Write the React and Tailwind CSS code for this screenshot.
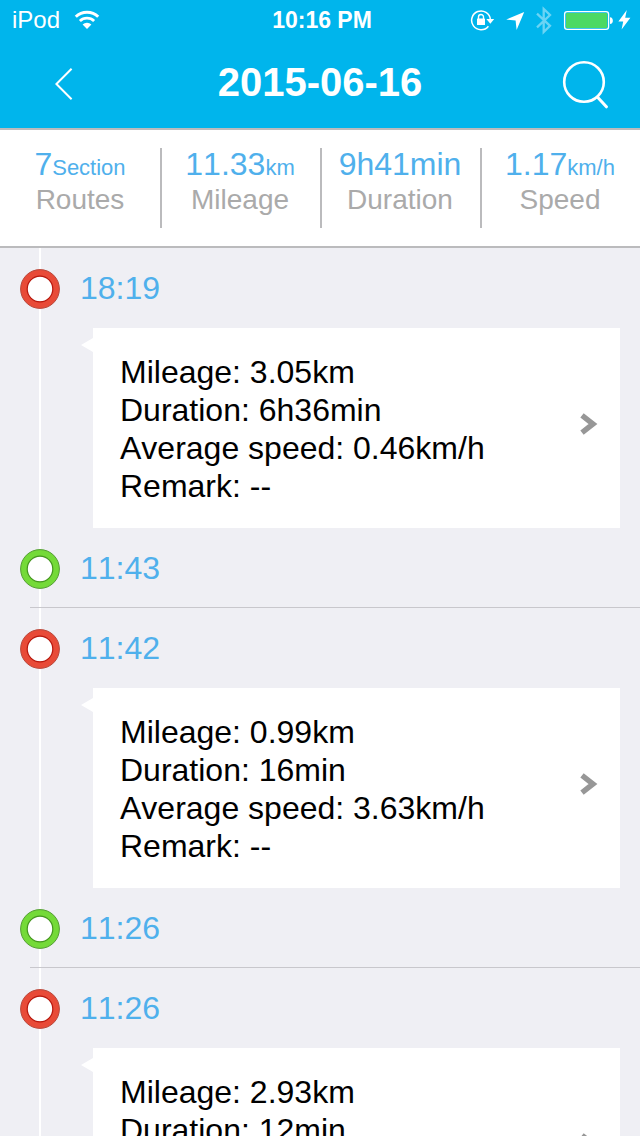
import React from "react";

const stats = [
  { value: "7", unit: "Section", label: "Routes" },
  { value: "11.33", unit: "km", label: "Mileage" },
  { value: "9h41min", unit: "", label: "Duration" },
  { value: "1.17", unit: "km/h", label: "Speed" },
];

const trips = [
  { end: "18:19", start: "11:43", mileage: "3.05km", duration: "6h36min", speed: "0.46km/h", remark: "--" },
  { end: "11:42", start: "11:26", mileage: "0.99km", duration: "16min", speed: "3.63km/h", remark: "--" },
  { end: "11:26", start: "11:13", mileage: "2.93km", duration: "12min", speed: "14.65km/h", remark: "--" },
];

function WifiIcon() {
  return (
    <svg width="26" height="20" viewBox="0 0 26 20" fill="none" aria-hidden="true">
      <path d="M1.8 6.8a16 16 0 0 1 22.4 0" stroke="#fff" strokeWidth="3" />
      <path d="M5.9 11a10.2 10.2 0 0 1 14.2 0" stroke="#fff" strokeWidth="2.8" />
      <path d="M13 19l-4.4-4.6a6.4 6.4 0 0 1 8.8 0z" fill="#fff" />
    </svg>
  );
}

function StatusIcons() {
  return (
    <svg width="162" height="30" viewBox="470 5 162 30" fill="none" aria-hidden="true">
      <path d="M488.4 26.2A9.4 9.4 0 1 1 490.4 19.5" stroke="#fff" strokeWidth="1.5" />
      <path d="M486.4 19h7.8l-3.9 4.8z" fill="#fff" />
      <rect x="477" y="18.4" width="8" height="6.6" rx="0.6" fill="#fff" />
      <path d="M478.5 19v-2a2.5 2.5 0 0 1 5 0v2" stroke="#fff" strokeWidth="1.4" />
      <path d="M524.2 12l-7.6 18-1-9.4-9.4-1z" fill="#fff" />
      <path
        d="M537 13.6l13 12.2-6.3 6.2V9l6.3 6-13 12.4"
        stroke="#fff"
        strokeOpacity="0.42"
        strokeWidth="2.3"
      />
      <rect x="564.6" y="11.6" width="44" height="17.8" rx="2.6" stroke="#fff" strokeWidth="1.3" />
      <rect x="566" y="13" width="41.2" height="15" rx="1" fill="#4cd964" />
      <path d="M610 17.2c3.8 0 3.8 6.8 0 6.8z" fill="#fff" />
      <path d="M626.8 10l-8.4 11.4h4.8l-1.6 8.2 8.8-11.8h-5.2z" fill="#fff" />
    </svg>
  );
}

function Marker({ kind }) {
  const end = kind === "end";
  const fill = end ? "#e84b38" : "#74da38";
  const edge = end ? "#b8493c" : "#559d35";
  const inner = end ? "#b8180d" : "#45961f";
  return (
    <svg className="relative shrink-0" width="40" height="42" viewBox="0 0 40 42" aria-hidden="true">
      <circle cx="20" cy="22" r="19.4" fill={fill} stroke={edge} strokeWidth="1" />
      <circle cx="20" cy="22" r="12.8" fill="#fff" stroke={inner} strokeWidth="1.2" />
    </svg>
  );
}

function TimeRow({ kind, time }) {
  return (
    <div className="flex h-20 items-center gap-5 px-5 text-[32px] leading-[38px] text-[#4fb0ec]">
      <Marker kind={kind} />
      <time>{time}</time>
    </div>
  );
}

function Trip({ trip }) {
  return (
    <li>
      <TimeRow kind="end" time={trip.end} />
      <a
        href="#trip"
        className="relative mr-5 ml-[93px] flex items-center justify-between bg-white pt-[25px] pr-[22px] pb-[23px] pl-[27px]"
      >
        <svg className="absolute top-2.5 -left-3" width="12" height="14" viewBox="0 0 12 14" aria-hidden="true">
          <path d="M12 0v14L0 7z" fill="#fff" />
        </svg>
        <div className="text-[32px] leading-[38px] text-black">
          <p>Mileage: {trip.mileage}</p>
          <p>Duration: {trip.duration}</p>
          <p>Average speed: {trip.speed}</p>
          <p>Remark: {trip.remark}</p>
        </div>
        <svg className="mb-2.5 shrink-0" width="18" height="24" viewBox="0 0 18 24" aria-hidden="true">
          <path d="M2 3.4L13 12 2 20.6" fill="none" stroke="#979797" strokeWidth="5.4" />
        </svg>
      </a>
      <TimeRow kind="start" time={trip.start} />
      <div className="relative -mt-px ml-[30px] h-px bg-[#c8c7cc]" />
    </li>
  );
}

export default function App() {
  return (
    <div className="flex h-screen flex-col overflow-hidden bg-[#efeff4] font-['Liberation_Sans',Arial,sans-serif] [font-kerning:none]">
      <header className="shrink-0 border-b-2 border-[#bbbbbd] bg-[#00b5ec] text-white">
        <div className="grid h-10 grid-cols-[1fr_auto_1fr] items-center pr-2 pl-3">
          <div className="flex items-center gap-3.5 text-2xl">
            <span>iPod</span>
            <WifiIcon />
          </div>
          <span className="text-[23px] font-bold">10:16 PM</span>
          <div className="flex justify-end">
            <StatusIcons />
          </div>
        </div>
        <div className="grid h-22 grid-cols-[1fr_auto_1fr] items-center px-8">
          <button type="button" aria-label="Back" className="flex h-16 w-16 items-center justify-center">
            <svg width="18" height="32" viewBox="0 0 18 32" fill="none" aria-hidden="true">
              <path d="M16.6 0.8L1.4 16l15.2 15.2" stroke="#fff" strokeWidth="2" />
            </svg>
          </button>
          <h1 className="pb-1 text-[40px] leading-[44px] font-bold">2015-06-16</h1>
          <button type="button" aria-label="Search" className="flex h-16 w-12 items-center justify-center justify-self-end">
            <svg width="48" height="50" viewBox="0 0 48 50" fill="none" aria-hidden="true">
              <circle cx="24" cy="23" r="19.8" stroke="#fff" strokeWidth="2.6" />
              <path d="M37.6 38.2l8.8 9.6" stroke="#fff" strokeWidth="3" strokeLinecap="round" />
            </svg>
          </button>
        </div>
      </header>

      <dl className="grid shrink-0 grid-cols-4 border-b-2 border-[#bbbbbd] bg-white py-[18px]">
        {stats.map((s) => (
          <div
            key={s.label}
            className="flex h-20 flex-col-reverse justify-end border-l-2 border-[#bbbbbd] pr-0.5 text-center first:border-transparent"
          >
            <dt className="text-[28px] leading-10 text-[#aaaaaa]">{s.label}</dt>
            <dd className="text-[32px] leading-8 whitespace-nowrap text-[#4fb0ec]">
              {s.value}
              <span className="text-[22px] leading-none">{s.unit}</span>
            </dd>
          </div>
        ))}
      </dl>

      <main className="min-h-0 flex-1 overflow-y-auto [scrollbar-width:none]">
        <ul className="relative">
          <li aria-hidden="true" className="absolute inset-y-0 left-[39px] w-0.5 bg-white" />
          {trips.map((t) => (
            <Trip key={t.end} trip={t} />
          ))}
        </ul>
      </main>
    </div>
  );
}
